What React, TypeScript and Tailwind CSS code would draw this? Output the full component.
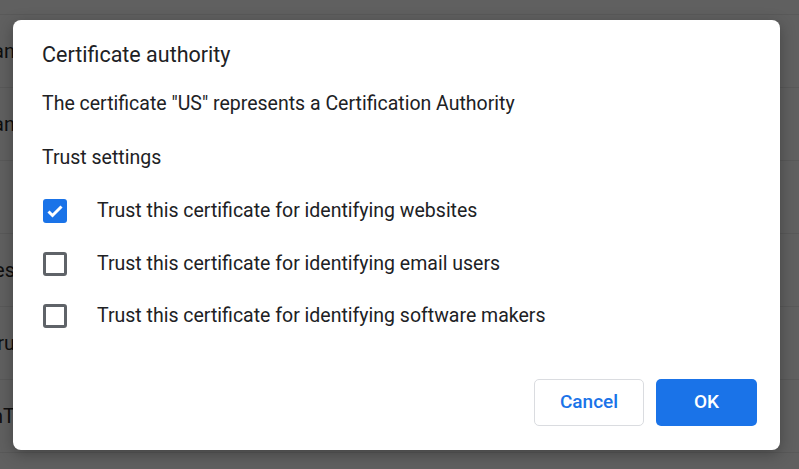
import React, { useState } from "react";

const rows = ["Organization Organization an", "Organization Organization an", "", "Certificates", "Certificate Tru", "Organization nT"];

const Checkbox = ({ checked, onClick }: { checked: boolean; onClick: () => void }) => (
  <button
    onClick={onClick}
    className={
      checked
        ? "w-[24px] h-[24px] rounded-[3px] bg-[#1a73e8] flex items-center justify-center shrink-0"
        : "w-[24px] h-[24px] rounded-[3px] border-[3px] border-[#5f6368] bg-white shrink-0"
    }
  >
    {checked && (
      <svg width="24" height="24" viewBox="0 0 24 24">
        <path d="M5.5 12.5l4 4L18.5 7.5" fill="none" stroke="white" strokeWidth="3" />
      </svg>
    )}
  </button>
);

const App = () => {
  const [trust, setTrust] = useState([true, false, false]);
  const labels = [
    "Trust this certificate for identifying websites",
    "Trust this certificate for identifying email users",
    "Trust this certificate for identifying software makers",
  ];

  return (
    <div className="relative w-[799px] h-[469px] overflow-hidden bg-[#606060] font-['Roboto',_'Liberation_Sans',_sans-serif]">
      {/* background page, dimmed */}
      <div className="h-[15px] border-b border-[#595959]" />
      {rows.map((r, i) => (
        <div key={i} className="h-[73px] border-b border-[#595959] flex items-center">
          <div className="w-[15px] overflow-hidden flex justify-end">
            <span className="whitespace-nowrap text-[20px] text-[#0e0e0e]">{r}</span>
          </div>
        </div>
      ))}

      {/* dialog */}
      <div className="absolute left-[13px] top-[20px] w-[767px] h-[430px] rounded-[8px] bg-white shadow-[0_4px_16px_rgba(0,0,0,0.3)] flex flex-col pl-[29px] pr-[23px] pb-[24px] text-[#202124]">
        <h1 className="mt-[22px] text-[21.5px] leading-[26px]">Certificate authority</h1>
        <p className="mt-[23px] text-[19.5px] leading-[26px]">The certificate "US" represents a Certification Authority</p>
        <p className="mt-[28px] text-[19.5px] leading-[26px]">Trust settings</p>
        {labels.map((l, i) => (
          <div key={i} className={`flex items-center pl-[1px] h-[26px] ${i === 0 ? "mt-[27px]" : i === 1 ? "mt-[27px]" : "mt-[26px]"}`}>
            <Checkbox checked={trust[i]} onClick={() => setTrust(trust.map((t, j) => (j === i ? !t : t)))} />
            <span className="ml-[30px] text-[19.5px] leading-[26px]">{l}</span>
          </div>
        ))}
        <div className="flex-1" />
        <div className="flex justify-end gap-[12px]">
          <button className="w-[110px] h-[47px] rounded-[5px] border border-[#dadce0] bg-white text-[#1a73e8] text-[19px] font-medium">
            Cancel
          </button>
          <button className="w-[101px] h-[47px] rounded-[5px] bg-[#1a73e8] text-white text-[19px] font-medium">
            OK
          </button>
        </div>
      </div>
    </div>
  );
};

export default App;
